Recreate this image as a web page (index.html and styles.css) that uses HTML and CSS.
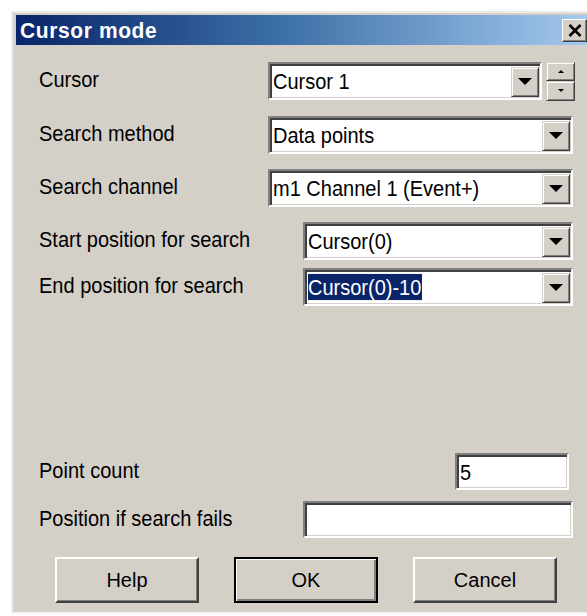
FILE: index.html
```html
<!DOCTYPE html>
<html>
<head>
<meta charset="utf-8">
<title>Cursor mode</title>
<link rel="stylesheet" href="styles.css">
</head>
<body>
<div class="window">
  <div class="titlebar">
    <span class="title">Cursor mode</span>
    <button class="close" aria-label="Close">
      <svg width="14" height="13" viewBox="0 0 14 13"><path d="M1.5 1 L12.5 12 M12.5 1 L1.5 12" stroke="#000" stroke-width="2.6" fill="none"/></svg>
    </button>
  </div>
  <div class="content">
    <div class="row r1">
      <span class="label w-a">Cursor</span>
      <div class="combo c-short"><span class="value">Cursor 1</span><span class="drop"><i class="tri"></i></span></div>
      <div class="spin"><span class="spin-btn"><i class="tri-up"></i></span><span class="spin-btn"><i class="tri-down"></i></span></div>
    </div>
    <div class="row r2">
      <span class="label w-a">Search method</span>
      <div class="combo c-wide"><span class="value">Data points</span><span class="drop"><i class="tri"></i></span></div>
    </div>
    <div class="row r3">
      <span class="label w-a">Search channel</span>
      <div class="combo c-wide"><span class="value">m1 Channel 1 (Event+)</span><span class="drop"><i class="tri"></i></span></div>
    </div>
    <div class="row r4">
      <span class="label w-b">Start position for search</span>
      <div class="combo c-mid"><span class="value">Cursor(0)</span><span class="drop"><i class="tri"></i></span></div>
    </div>
    <div class="row r5">
      <span class="label w-b">End position for search</span>
      <div class="combo c-mid"><span class="value"><span class="sel">Cursor(0)-10</span></span><span class="drop"><i class="tri"></i></span></div>
    </div>
    <div class="row r6">
      <span class="label w-c">Point count</span>
      <div class="edit e-small"><span class="value">5</span></div>
    </div>
    <div class="row r7">
      <span class="label w-b">Position if search fails</span>
      <div class="edit e-mid"><span class="value"></span></div>
    </div>
    <div class="buttons">
      <button class="btn">Help</button>
      <button class="btn default">OK</button>
      <button class="btn">Cancel</button>
    </div>
  </div>
</div>
</body>
</html>
```

FILE: styles.css
```css
html, body {
  margin: 0;
  padding: 0;
  background: #fff;
}

body {
  width: 587px;
  height: 616px;
  overflow: hidden;
  font-family: "Liberation Sans", Arial, sans-serif;
  font-size: 20px;
  color: #000;
}

/* dialog frame */
.window {
  box-sizing: border-box;
  margin: 11px 0 0 11px;
  width: 584px;
  height: 603px;
  background: #d4d0c8;
  border: 2px solid;
  border-color: #eeece8 #404040 #f4f3f0 #eeece8;
  padding: 2px 3px 0 3px;
  display: flex;
  flex-direction: column;
}

.titlebar {
  height: 30px;
  flex: none;
  background: linear-gradient(to right, #0a246a 0%, #3a6ea5 45%, #a6caf0 100%);
  display: flex;
  align-items: center;
  justify-content: space-between;
  padding: 0 3px 0 4px;
}

.title {
  color: #fff;
  font-weight: bold;
  font-size: 21px;
  letter-spacing: 0.6px;
  display: inline-block;
  transform: scaleY(1.08);
}

.close {
  box-sizing: border-box;
  width: 25px;
  height: 23px;
  padding: 0;
  margin: 0;
  background: #d4d0c8;
  border: 1px solid;
  border-color: #fff #404040 #404040 #fff;
  box-shadow: inset -1px -1px 0 #808080;
  display: flex;
  align-items: center;
  justify-content: center;
}

.content {
  flex: 1;
  padding: 0 0 0 23px;
  display: flex;
  flex-direction: column;
}

.row {
  display: flex;
  align-items: center;
  height: 38px;
  flex: none;
}

.r1 { margin-top: 17px; }
.r2 { margin-top: 16px; }
.r3 { margin-top: 15px; }
.r4 { margin-top: 15px; }
.r5 { margin-top: 8px; }
.r6 { margin-top: 147px; height: 37px; }
.r7 { margin-top: 11px; height: 37px; }

.label {
  flex: none;
  white-space: nowrap;
  display: inline-block;
  transform: scaleY(1.1);
  transform-origin: left center;
  margin-top: -3px;
}

.w-a { width: 229px; }
.w-b { width: 264px; }
.w-c { width: 416px; }

/* sunken field shared by combo boxes and edits */
.combo, .edit {
  box-sizing: border-box;
  height: 100%;
  background: #fff;
  border: 2px solid;
  border-color: #808080 #fff #fff #808080;
  box-shadow: inset 2px 2px 0 #404040, inset -1px -1px 0 #d4d0c8;
  display: flex;
  align-items: center;
  position: relative;
}

.c-short { width: 274px; }
.c-wide { width: 305px; }
.c-mid { width: 270px; }
.e-small { width: 114px; }
.e-mid { width: 270px; }

.value {
  flex: 1;
  padding-left: 3px;
  white-space: nowrap;
  overflow: hidden;
  line-height: 24px;
  transform: scaleY(1.1);
  transform-origin: left center;
}

.sel {
  background: #0a246a;
  color: #fff;
  padding: 1px 1px 1px 0;
}

.drop {
  box-sizing: border-box;
  flex: none;
  width: 28px;
  height: calc(100% - 4px);
  margin-right: 1px;
  margin-top: 1px;
  background: #d4d0c8;
  border: 1px solid;
  border-color: #d4d0c8 #404040 #404040 #d4d0c8;
  box-shadow: inset 1px 1px 0 #fff, inset -1px -1px 0 #808080;
  display: flex;
  align-items: center;
  justify-content: center;
}

.tri {
  width: 0;
  height: 0;
  border-left: 7px solid transparent;
  border-right: 7px solid transparent;
  border-top: 7px solid #000;
}

/* up/down spinner beside the cursor selector */
.spin {
  flex: none;
  margin-left: 4px;
  width: 29px;
  height: 39px;
  display: flex;
  flex-direction: column;
}

.spin-btn {
  box-sizing: border-box;
  flex: 1;
  background: #d4d0c8;
  border: 1px solid;
  border-color: #d4d0c8 #404040 #404040 #d4d0c8;
  box-shadow: inset 1px 1px 0 #fff, inset -1px -1px 0 #808080;
  display: flex;
  align-items: center;
  justify-content: center;
}

.tri-up, .tri-down {
  width: 0;
  height: 0;
  border-left: 3px solid transparent;
  border-right: 3px solid transparent;
}

.tri-up { border-bottom: 3px solid #000; }
.tri-down { border-top: 3px solid #000; }

.buttons {
  display: flex;
  gap: 35px;
  margin-top: 19px;
  padding-left: 16px;
}

.btn {
  box-sizing: border-box;
  width: 144px;
  height: 46px;
  margin: 0;
  padding: 0;
  font-family: "Liberation Sans", Arial, sans-serif;
  font-size: 20px;
  color: #000;
  background: #d4d0c8;
  border: 2px solid;
  border-color: #fff #404040 #404040 #fff;
  box-shadow: inset -1px -1px 0 #808080;
}

.btn.default {
  border: 2px solid #000;
  box-shadow: inset 1px 1px 0 #fff, inset -2px -2px 0 #808080;
}
```
